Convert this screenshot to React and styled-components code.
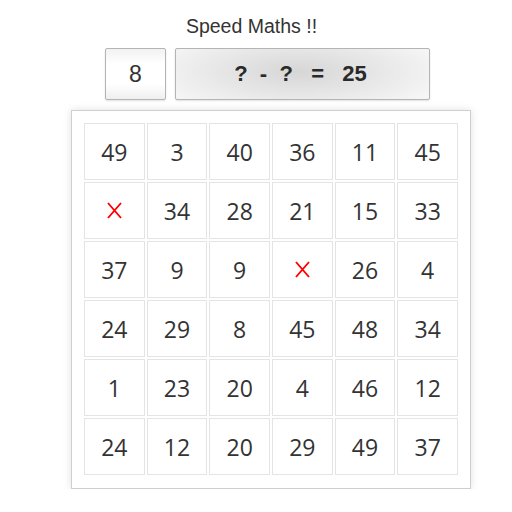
import React from "react";
import styled, { createGlobalStyle } from "styled-components";

const Global = createGlobalStyle`
  html, body { margin: 0; padding: 0; background: #fff; }
  body { font-family: "Liberation Sans", Arial, sans-serif; }
`;

const Page = styled.div`
  width: 512px;
  padding-top: 15px;
  display: flex;
  flex-direction: column;
`;

const Title = styled.div`
  width: 503px;
  text-align: center;
  font-size: 19.5px;
  line-height: 22px;
  color: #333;
`;

const TopRow = styled.div`
  display: flex;
  gap: 9px;
  margin: 11px 0 0 105px;
`;

const Box = styled.div`
  box-sizing: border-box;
  height: 52px;
  width: ${(p) => p.$w}px;
  border: 1px solid #b4b4b4;
  border-radius: 2px;
  display: flex;
  align-items: center;
  justify-content: center;
  color: #333;
  box-shadow: 0 1px 2px rgba(0, 0, 0, 0.12);
`;

const CountBox = styled(Box)`
  background: linear-gradient(180deg, #f2f2f2 0%, #ffffff 30%, #ffffff 70%, #efefef 100%);
  font-size: 23px;
`;

const EqBox = styled(Box)`
  background: radial-gradient(ellipse 60% 90% at 48% 45%, #d6d6d6 0%, #e6e6e6 50%, #f6f6f6 100%);
  font-family: "Liberation Sans", Arial, sans-serif;
  font-weight: bold;
  font-size: 22px;
  white-space: pre;
  color: #2a2a2a;
  padding-right: 4px;
`;

const Panel = styled.div`
  box-sizing: border-box;
  width: 400px;
  margin: 10px 0 0 71px;
  padding: 12px 12px 13px 12px;
  border: 1px solid #cfcfcf;
  box-shadow: 0 0 8px rgba(0, 0, 0, 0.12);
  background: #fff;
`;

const Grid = styled.div`
  display: grid;
  grid-template-columns: repeat(6, 1fr);
  grid-auto-rows: 57px;
  gap: 2px;
`;

const Cell = styled.div`
  box-sizing: border-box;
  border: 1px solid #e4e4e4;
  display: flex;
  align-items: center;
  justify-content: center;
  font-family: "Open Sans", sans-serif;
  font-size: 23px;
  color: ${(p) => (p.$hit ? "#ff0000" : "#333")};
`;

const board = [
  [49, 3, 40, 36, 11, 45],
  ["X", 34, 28, 21, 15, 33],
  [37, 9, 9, "X", 26, 4],
  [24, 29, 8, 45, 48, 34],
  [1, 23, 20, 4, 46, 12],
  [24, 12, 20, 29, 49, 37],
];

const Cross = () => (
  <svg width="15" height="17" viewBox="0 0 15 17">
    <path d="M1 1 L14 16 M14 1 L1 16" stroke="#ff0000" strokeWidth="1.9" fill="none" />
  </svg>
);

export default function App() {
  return (
    <>
      <Global />
      <Page>
        <Title>Speed Maths !!</Title>
        <TopRow>
          <CountBox $w={61}>8</CountBox>
          <EqBox $w={255}>{"?  -  ?   =   25"}</EqBox>
        </TopRow>
        <Panel>
          <Grid>
            {board.flat().map((v, i) => (
              <Cell key={i} $hit={v === "X"}>
                {v === "X" ? <Cross /> : v}
              </Cell>
            ))}
          </Grid>
        </Panel>
      </Page>
    </>
  );
}
